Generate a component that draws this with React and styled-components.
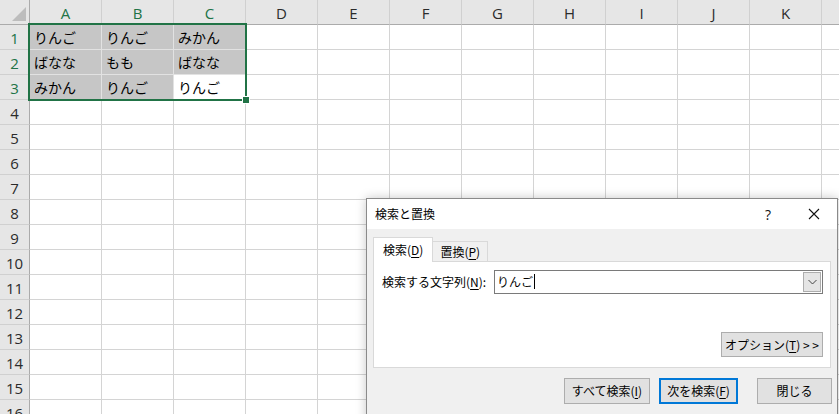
import React from "react";
import styled, { createGlobalStyle, css } from "styled-components";

const Global = createGlobalStyle`
  html, body { margin: 0; padding: 0; background: #fff; }
  body { width: 839px; height: 414px; overflow: hidden; }
  * { box-sizing: border-box; }
`;

const JP = `"Noto Sans CJK JP", "Noto Sans", sans-serif`;
const UI = `"Open Sans", "Liberation Sans", "Noto Sans CJK JP", sans-serif`;

const Screen = styled.div`
  position: relative;
  width: 839px;
  height: 414px;
  overflow: hidden;
  background: #fff;
`;

const Sheet = styled.div`
  display: grid;
  grid-template-columns: 30px repeat(12, 72px);
  grid-template-rows: 25px repeat(16, 25px);
  width: max-content;
`;

const Corner = styled.div`
  position: relative;
  background: #e6e6e6;
  border-right: 1px solid #ababab;
  border-bottom: 1px solid #ababab;
  &::after {
    content: "";
    position: absolute;
    right: 3px;
    bottom: 3px;
    width: 0;
    height: 0;
    border-left: 14px solid transparent;
    border-bottom: 14px solid #bdbdbd;
  }
`;

const ColHead = styled.div`
  background: #e6e6e6;
  border-right: 1px solid #d0d0d0;
  border-bottom: 1px solid #ababab;
  display: flex;
  align-items: center;
  justify-content: center;
  font-family: ${UI};
  font-size: 15px;
  color: ${(p) => (p.$sel ? "#217346" : "#2b2b2b")};
  padding-top: 1px;
`;

const RowHead = styled.div`
  background: #e6e6e6;
  border-right: 1px solid #ababab;
  border-bottom: 1px solid #d0d0d0;
  display: flex;
  align-items: center;
  justify-content: center;
  font-family: ${UI};
  font-size: 15px;
  color: ${(p) => (p.$sel ? "#217346" : "#2b2b2b")};
  padding-top: 1px;
`;

const Cell = styled.div`
  border-right: 1px solid #d4d4d4;
  border-bottom: 1px solid #d4d4d4;
  background: ${(p) => (p.$sel ? "#c6c6c6" : "#fff")};
  font-family: ${JP};
  font-size: 14px;
  color: #000;
  display: flex;
  align-items: center;
  padding-left: 4px;
  white-space: nowrap;
  overflow: hidden;
  ${(p) =>
    p.$sel &&
    css`
      border-right-color: #e2e2e2;
      border-bottom-color: #e2e2e2;
    `}
`;

const SelectionFrame = styled.div`
  position: absolute;
  left: 28px;
  top: 23px;
  width: 219px;
  height: 78px;
  border: 2px solid #217346;
  pointer-events: none;
  &::after {
    content: "";
    position: absolute;
    right: -5px;
    bottom: -5px;
    width: 6px;
    height: 6px;
    background: #217346;
    border: 1px solid #fff;
  }
`;

/* ---------- dialog ---------- */

const Dialog = styled.div`
  position: absolute;
  left: 366px;
  top: 198px;
  width: 472px;
  height: 240px;
  background: #f0f0f0;
  border: 1px solid #8a8a8a;
  box-shadow: 0 0 10px rgba(0, 0, 0, 0.22);
  font-family: ${JP};
  font-size: 12px;
  color: #000;
  display: flex;
  flex-direction: column;
`;

const TitleBar = styled.div`
  height: 30px;
  background: #fff;
  display: flex;
  align-items: center;
  padding-left: 8px;
`;

const Title = styled.div`
  flex: 1;
  font-size: 12px;
  padding-bottom: 2px;
`;

const TitleButton = styled.div`
  width: ${(p) => p.$w}px;
  height: 30px;
  display: flex;
  align-items: center;
  justify-content: center;
  font-family: ${UI};
  font-size: 14px;
  color: #111;
`;

const Body = styled.div`
  padding: 9px 6px 0 6px;
  display: flex;
  flex-direction: column;
`;

const Tabs = styled.div`
  display: flex;
  align-items: flex-end;
  height: 24px;
  position: relative;
  z-index: 1;
`;

const Tab = styled.div`
  height: ${(p) => (p.$active ? 25 : 21)}px;
  padding: 0 ${(p) => (p.$active ? 9 : 7)}px;
  display: flex;
  align-items: center;
  background: ${(p) => (p.$active ? "#fff" : "#f0f0f0")};
  border: 1px solid #d9d9d9;
  border-bottom: ${(p) => (p.$active ? "none" : "1px solid #d9d9d9")};
  margin-left: ${(p) => (p.$active ? 0 : -1)}px;
  padding-bottom: ${(p) => (p.$active ? 2 : 1)}px;
`;

const Panel = styled.div`
  background: #fff;
  border: 1px solid #d9d9d9;
  height: 107px;
  margin-top: -1px;
  padding: 8px 7px 0 8px;
  display: flex;
  flex-direction: column;
`;

const FieldRow = styled.div`
  display: flex;
  align-items: center;
  height: 24px;
`;

const Label = styled.div`
  width: 112px;
  padding-bottom: 1px;
`;

const Combo = styled.div`
  flex: 1;
  height: 24px;
  border: 1px solid #7a7a7a;
  background: #fff;
  display: flex;
  align-items: stretch;
`;

const ComboText = styled.div`
  flex: 1;
  display: flex;
  align-items: center;
  padding-left: 2px;
  padding-bottom: 1px;
`;

const Caret = styled.span`
  display: inline-block;
  width: 1px;
  height: 15px;
  background: #000;
  margin-left: 1px;
`;

const DropButton = styled.div`
  width: 18px;
  margin: 1px;
  background: #e5e5e5;
  border: 1px solid #adadad;
  display: flex;
  align-items: center;
  justify-content: center;
`;

const OptionsRow = styled.div`
  margin-top: 38px;
  display: flex;
  justify-content: flex-end;
`;

const Button = styled.div`
  width: ${(p) => p.$w}px;
  height: ${(p) => p.$h || 26}px;
  background: #e1e1e1;
  border: ${(p) => (p.$default ? "2px solid #0078d7" : "1px solid #adadad")};
  display: flex;
  align-items: center;
  justify-content: center;
  padding-bottom: 1px;
  white-space: nowrap;
`;

const Footer = styled.div`
  display: flex;
  justify-content: flex-end;
  margin-top: 10px;
  margin-right: -1px;
`;

const Gap = styled.div`
  width: ${(p) => p.$w}px;
`;

const U = styled.span`
  text-decoration: underline;
  text-underline-offset: 2px;
`;

const cols = ["A", "B", "C", "D", "E", "F", "G", "H", "I", "J", "K", "L"];
const data = [
  ["りんご", "りんご", "みかん"],
  ["ばなな", "もも", "ばなな"],
  ["みかん", "りんご", "りんご"],
];

export default function App() {
  const rows = [];
  for (let r = 1; r <= 16; r++) {
    rows.push(
      <RowHead key={`rh${r}`} $sel={r <= 3}>
        {r}
      </RowHead>
    );
    cols.forEach((c, ci) => {
      const val = r <= 3 && ci < 3 ? data[r - 1][ci] : "";
      const sel = r <= 3 && ci < 3 && !(r === 3 && ci === 2);
      rows.push(
        <Cell key={`${c}${r}`} $sel={sel}>
          {val}
        </Cell>
      );
    });
  }

  return (
    <Screen>
      <Global />
      <Sheet>
        <Corner />
        {cols.map((c, i) => (
          <ColHead key={c} $sel={i < 3}>
            {c}
          </ColHead>
        ))}
        {rows}
      </Sheet>
      <SelectionFrame />

      <Dialog>
        <TitleBar>
          <Title>検索と置換</Title>
          <TitleButton $w={46}>?</TitleButton>
          <TitleButton $w={46}>
            <svg width="12" height="12" viewBox="0 0 12 12">
              <path d="M1 1 L11 11 M11 1 L1 11" stroke="#111" strokeWidth="1.1" fill="none" />
            </svg>
          </TitleButton>
        </TitleBar>
        <Body>
          <Tabs>
            <Tab $active>
              検索(<U>D</U>)
            </Tab>
            <Tab>
              置換(<U>P</U>)
            </Tab>
          </Tabs>
          <Panel>
            <FieldRow>
              <Label>
                検索する文字列(<U>N</U>):
              </Label>
              <Combo>
                <ComboText>
                  りんご
                  <Caret />
                </ComboText>
                <DropButton>
                  <svg width="9" height="6" viewBox="0 0 9 6">
                    <path d="M0.5 1 L4.5 5 L8.5 1" stroke="#444" strokeWidth="1" fill="none" />
                  </svg>
                </DropButton>
              </Combo>
            </FieldRow>
            <OptionsRow>
              <Button $w={102} $h={25}>
                オプション(<U>T</U>) &gt; &gt;
              </Button>
            </OptionsRow>
          </Panel>
          <Footer>
            <Button $w={86}>
              すべて検索(<U>I</U>)
            </Button>
            <Gap $w={9} />
            <Button $w={79} $default>
              次を検索(<U>F</U>)
            </Button>
            <Gap $w={19} />
            <Button $w={75}>閉じる</Button>
          </Footer>
        </Body>
      </Dialog>
    </Screen>
  );
}
